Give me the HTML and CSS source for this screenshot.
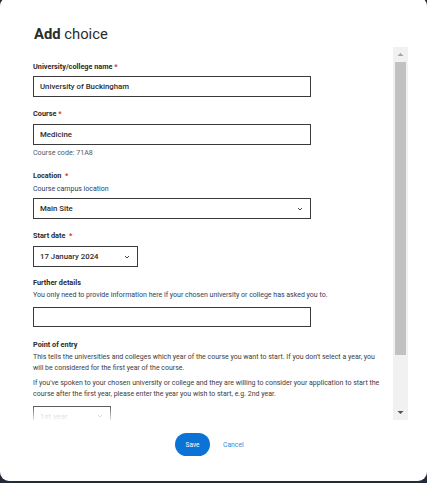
FILE: index.html
```html
<!DOCTYPE html>
<html lang="en">
<head>
<meta charset="utf-8">
<title>Add choice</title>
<link rel="stylesheet" href="styles.css">
</head>
<body>
<div class="modal">
  <h1 class="title"><b>Add</b> choice</h1>
  <div class="scroll-wrap">
    <div class="scroll">
      <div class="field f1">
        <label class="label">University/college name <span class="req">*</span></label>
        <div class="input">University of Buckingham</div>
      </div>
      <div class="field f2">
        <label class="label">Course <span class="req">*</span></label>
        <div class="input">Medicine</div>
        <div class="code">Course code: 71A8</div>
      </div>
      <div class="field f3">
        <label class="label">Location &nbsp;<span class="req">*</span></label>
        <div class="hint">Course campus location</div>
        <div class="input select">Main Site
          <svg class="chev" width="6" height="4" viewBox="0 0 6 4"><path d="M1 1 L3 3 L5 1" fill="none" stroke="#444" stroke-width="1"/></svg>
        </div>
      </div>
      <div class="field f4">
        <label class="label">Start date &nbsp;<span class="req">*</span></label>
        <div class="input select date">17 January 2024
          <svg class="chev" width="6" height="4" viewBox="0 0 6 4"><path d="M1 1 L3 3 L5 1" fill="none" stroke="#444" stroke-width="1"/></svg>
        </div>
      </div>
      <div class="field f5">
        <label class="label">Further details</label>
        <div class="hint">You only need to provide information here if your chosen university or college has asked you to.</div>
        <div class="input empty"></div>
      </div>
      <div class="field f6">
        <label class="label">Point of entry</label>
        <p class="para">This tells the universities and colleges which year of the course you want to start. If you don't select a year, you will be considered for the first year of the course.</p>
        <p class="para p2">If you've spoken to your chosen university or college and they are willing to consider your application to start the course after the first year, please enter the year you wish to start, e.g. 2nd year.</p>
        <div class="input select year">1st year
          <svg class="chev" width="6" height="4" viewBox="0 0 6 4"><path d="M1 1 L3 3 L5 1" fill="none" stroke="#999" stroke-width="1"/></svg>
        </div>
      </div>
      <div class="fade"></div>
    </div>
    <div class="scrollbar">
      <svg class="arrow" width="15" height="15" viewBox="0 0 15 15"><path d="M4.5 9 L7.5 6 L10.5 9 Z" fill="#a3a3a3"/></svg>
      <div class="track"><div class="thumb"></div></div>
      <svg class="arrow" width="15" height="15" viewBox="0 0 15 15"><path d="M4.5 6 L7.5 9 L10.5 6 Z" fill="#505050"/></svg>
    </div>
  </div>
  <div class="footer">
    <button class="save">Save</button>
    <a class="cancel" href="#">Cancel</a>
  </div>
</div>
</body>
</html>
```
FILE: styles.css
```css
html, body {
  margin: 0;
  padding: 0;
}
body {
  background: #222b38;
  height: 483px;
  overflow: hidden;
  font-family: Roboto, "Noto Sans", Arial, sans-serif;
  color: #2b2b2b;
}
.modal {
  background: #fff;
  margin-top: -3px;
  height: 484px;
  border-radius: 9px;
  box-sizing: border-box;
  padding-top: 27px;
  display: flex;
  flex-direction: column;
}
.title {
  margin: 0 0 3px 34px;
  font-size: 14.8px;
  line-height: 20px;
  font-weight: 400;
  color: #2b2b2b;
}
.title b {
  font-weight: 700;
}
.scroll-wrap {
  margin-left: 20px;
  width: 388px;
  height: 373px;
  display: flex;
}
.scroll {
  position: relative;
  flex: 1;
  overflow: hidden;
  box-sizing: border-box;
  padding: 15px 0 0 13px;
}
.fade {
  position: absolute;
  left: 0;
  right: 0;
  bottom: 0;
  height: 16px;
  background: linear-gradient(rgba(255,255,255,0), rgba(255,255,255,0.85));
  pointer-events: none;
}
.scrollbar {
  width: 15px;
  background: #f1f1f1;
  display: flex;
  flex-direction: column;
}
.arrow {
  display: block;
  flex: none;
}
.track {
  flex: 1;
  padding: 0 2px;
}
.thumb {
  height: 293px;
  background: #c1c1c1;
}
.field {
  display: flex;
  flex-direction: column;
  align-items: flex-start;
}
.label {
  font-size: 7.3px;
  line-height: 10px;
  font-weight: 700;
  color: #2b2b2b;
}
.req {
  color: #d4351c;
}
.input {
  box-sizing: border-box;
  width: 278px;
  height: 21px;
  border: 1.5px solid #3a3a3a;
  padding: 0 0 0 6px;
  font-size: 7.8px;
  font-weight: 500;
  color: #2b2b2b;
  display: flex;
  align-items: center;
}
.f1 .input { margin-top: 4px; }
.f2 { margin-top: 12px; }
.f2 .input { margin-top: 5px; }
.code {
  margin-top: 3px;
  font-size: 7.1px;
  line-height: 10px;
  color: #505a5f;
}
.f3 { margin-top: 13px; }
.hint {
  font-size: 7px;
  line-height: 10px;
  color: #2c3e5c;
}
.f3 .hint { margin-top: 2.5px; }
.f3 .input { margin-top: 4.5px; }
.select {
  justify-content: space-between;
  padding-right: 7px;
}
.chev {
  display: block;
}
.f4 { margin-top: 12px; }
.f4 .input { margin-top: 5px; width: 105px; }
.f5 { margin-top: 11px; }
.f5 .hint { margin-top: 2px; }
.f5 .input { margin-top: 7px; height: 20px; }
.f6 { margin-top: 13px; }
.para {
  margin: 1.5px 0 0;
  font-size: 7px;
  line-height: 11.5px;
  color: #3d3d3d;
  max-width: 350px;
}
.para.p2 { margin-top: 3px; }
.f6 .input {
  margin-top: 5px;
  width: 78px;
  font-weight: 400;
  color: #a8a8a8;
  border-color: #444;
}
.footer {
  display: flex;
  align-items: center;
  gap: 13px;
  margin-top: 13px;
  padding-left: 175px;
}
.save {
  width: 35px;
  height: 23px;
  border: none;
  border-radius: 12px;
  background: #0b72d6;
  color: #fff;
  font-family: inherit;
  font-size: 6.5px;
  padding: 0;
}
.cancel {
  font-size: 6.8px;
  color: #3a88d8;
  text-decoration: none;
}
```
